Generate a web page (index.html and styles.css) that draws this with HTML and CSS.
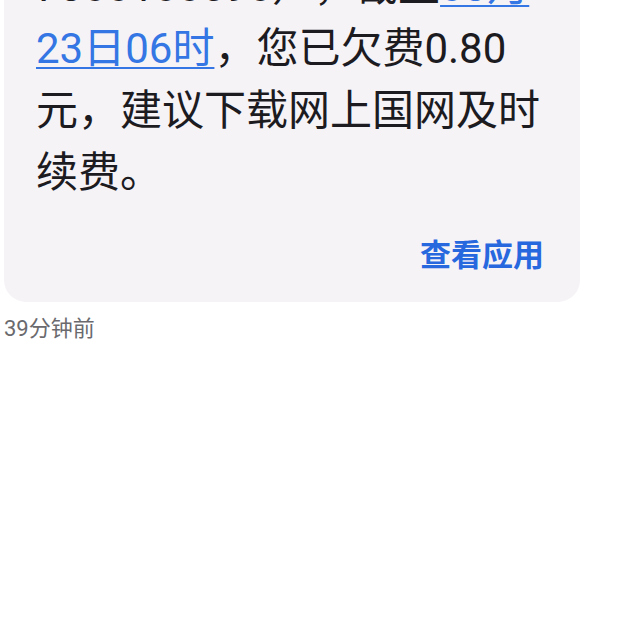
FILE: index.html
```html
<!DOCTYPE html>
<html lang="zh-CN">
<head>
<meta charset="utf-8">
<title>短信</title>
<link rel="stylesheet" href="styles.css">
</head>
<body>
<div class="thread">
  <div class="bubble">
    <p class="msg">尊敬的客户，您的户号7300100590），截止<a class="link" href="#">03月23日06时</a>，您已欠费0.80元，建议下载网上国网及时续费。</p>
    <div class="actions"><a class="action" href="#">查看应用</a></div>
  </div>
  <div class="time">39分钟前</div>
</div>
</body>
</html>
```

FILE: styles.css
```css
html, body {
  margin: 0;
  padding: 0;
  background: #ffffff;
}

body {
  font-family: Roboto, "Noto Sans CJK SC", sans-serif;
  overflow: hidden;
  height: 630px;
}

.thread {
  padding-left: 4px;
}

.bubble {
  width: 576px;
  box-sizing: border-box;
  margin-top: -130px;
  padding: 24px 36px 21px 32px;
  background: #f6f3f7;
  border-radius: 22px;
}

.msg {
  margin: 0;
  font-size: 42px;
  line-height: 62px;
  color: #1c1b1f;
  text-spacing-trim: space-all;
}

.link {
  color: #3476e3;
  text-decoration: underline;
  text-decoration-thickness: 2px;
  text-underline-offset: 4px;
}

.actions {
  margin-top: 32px;
  text-align: right;
  line-height: 40px;
}

.action {
  font-size: 31px;
  font-weight: 700;
  color: #2768df;
  text-decoration: none;
}

.time {
  margin-top: 12px;
  font-size: 22px;
  line-height: 30px;
  color: #6a6a6e;
}
```
